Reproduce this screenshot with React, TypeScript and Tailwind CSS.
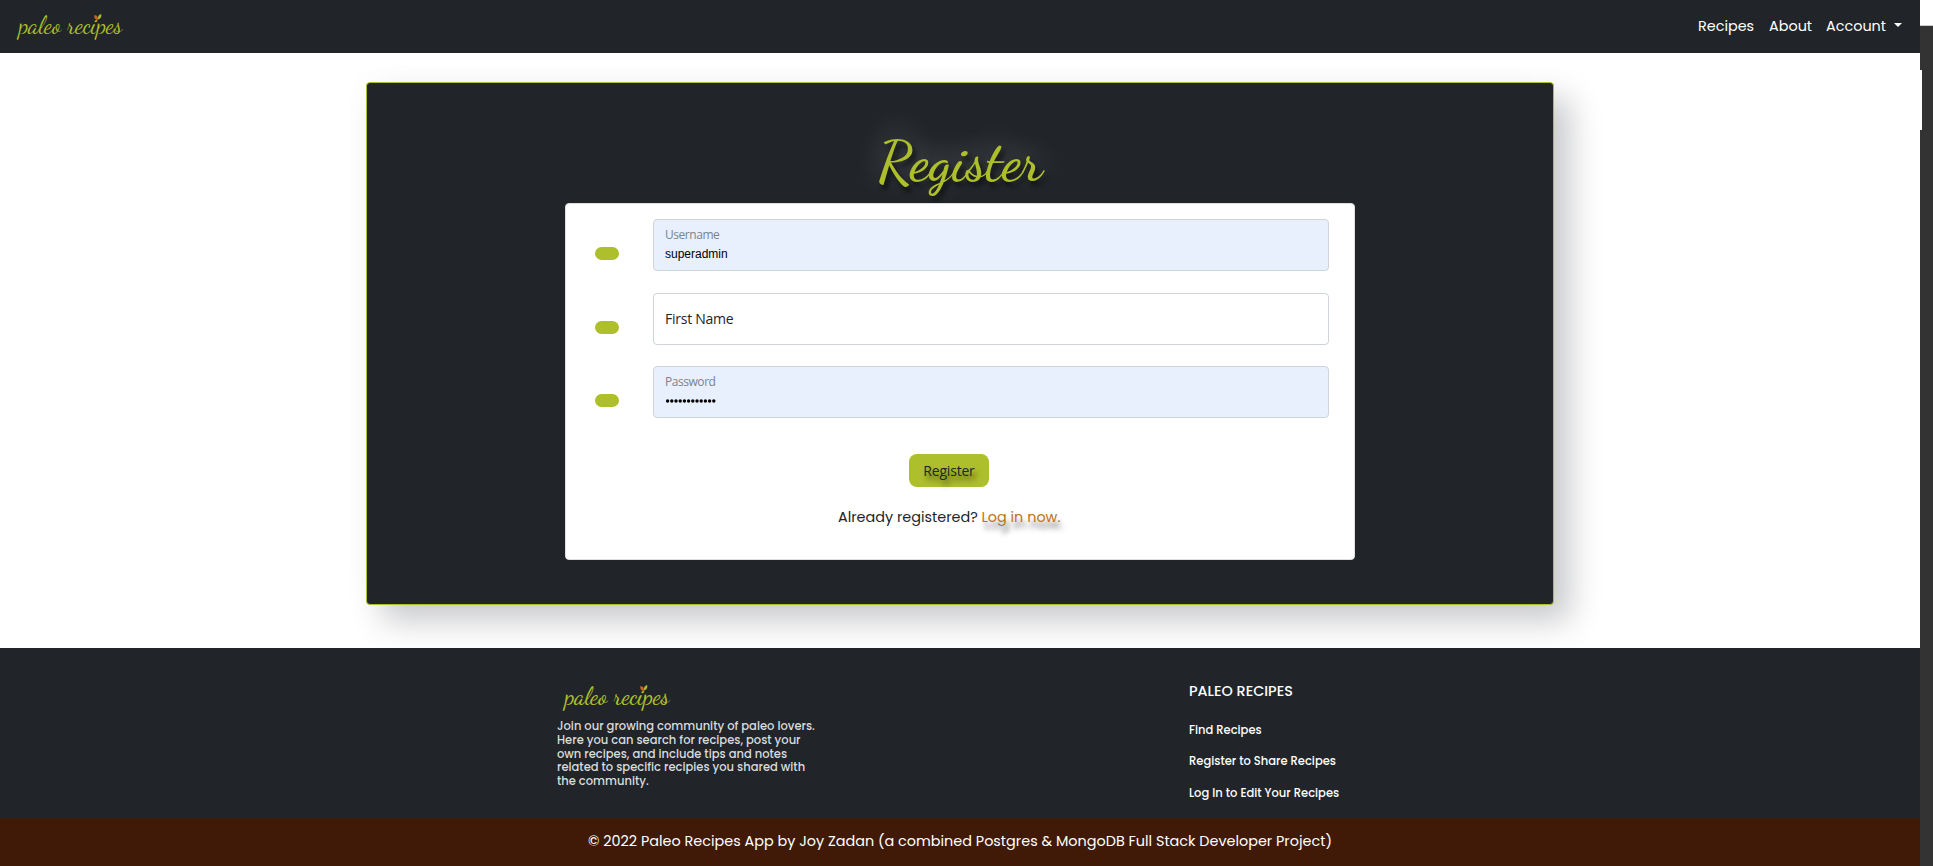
import type { ReactNode } from "react";

function Logo() {
  return (
    <span className="relative block h-[30px] w-[110px] whitespace-nowrap font-['Dancing_Script','Liberation_Serif',cursive] text-[23.8px] leading-[30px] text-[#adbf2a]">
      paleo recipes
      <svg className="absolute left-[75px] top-[3px]" width="8" height="7" viewBox="0 0 8 7">
        <path d="M0.2 1.2C2.8 0.9 4.2 2.6 4 6C1.4 6 0 4.2 0.2 1.2Z" fill="#c8641a" />
        <path d="M7.2 0C7.8 2.8 6.6 5 4 5.6C3.4 2.8 4.6 0.6 7.2 0Z" fill="#adbf2a" />
      </svg>
    </span>
  );
}

function Row({ className, children }: { className: string; children: ReactNode }) {
  return (
    <div className={`flex h-[52px] items-start ${className}`}>
      <span className="mt-[28px] h-[13px] w-6 rounded-full bg-[#adbf2a]" />
      {children}
    </div>
  );
}

function FilledField({ label, value }: { label: string; value: ReactNode }) {
  return (
    <div className="ml-[34px] h-[52px] w-[676px] rounded-[4px] border border-[#ced4da] bg-[#e8f0fe] px-[11px] pt-[7px]">
      <div className="h-4 font-['Open_Sans',sans-serif] text-[12px] leading-4 tracking-[-0.45px] text-[#7c838b]">{label}</div>
      {value}
    </div>
  );
}

export default function App() {
  return (
    <div className="flex h-[866px] w-[1933px] overflow-hidden bg-white font-['Poppins','Inter',sans-serif] text-[#212529]">
      <div className="flex w-[1920px] flex-col">
        <header className="relative z-10 flex h-[53px] items-center justify-between bg-[#212529] pb-px pl-[19px] pr-[18px]">
          <Logo />
          <nav className="flex items-center text-[14.4px] leading-6 text-white">
            <a className="w-[71px]">Recipes</a>
            <a className="w-[57px]">About</a>
            <a className="w-[68px]">Account</a>
            <svg className="-mt-0.5" width="8" height="4" viewBox="0 0 8 4">
              <path d="M0 0H8L4 4Z" fill="#fff" />
            </svg>
          </nav>
        </header>

        <main className="flex h-[595px] justify-center pt-[29px]">
          <section className="flex h-[523px] w-[1188px] flex-col items-center rounded-[4px] border border-[#adbf2a] bg-[#212529] shadow-[16px_16px_32px_#c8c9cc,-16px_-16px_32px_#fefefe]">
            <h1 className="mt-[39px] h-[81px] font-['Dancing_Script','Liberation_Serif',cursive] text-[57px] font-semibold leading-[80px] text-[#adbf2a] [text-shadow:3px_5px_5px_rgba(0,0,0,0.6),0_-8px_30px_rgba(255,255,255,0.3)]">
              Register
            </h1>
            <form className="h-[357px] w-[790px] rounded-[4px] border border-[#dfdfdf] bg-white pl-[29px]">
              <Row className="mt-[15px]">
                <FilledField
                  label="Username"
                  value={<div className="font-['Liberation_Sans',sans-serif] text-[12px] leading-[22px] text-black">superadmin</div>}
                />
              </Row>
              <Row className="mt-[22px]">
                <div className="ml-[34px] h-[52px] w-[676px] rounded-[4px] border border-[#ced4da] bg-white px-[11px] font-['Open_Sans',sans-serif] text-[14px] leading-[50px] tracking-[-0.25px]">
                  First Name
                </div>
              </Row>
              <Row className="mt-[21px]">
                <FilledField
                  label="Password"
                  value={
                    <svg className="mt-[9px]" width="52" height="4" viewBox="0 0 52 4">
                      {Array.from({ length: 12 }, (_, i) => (
                        <circle key={i} cx={2.6 + i * 4.2} cy="2" r="1.7" fill="#000" />
                      ))}
                    </svg>
                  }
                />
              </Row>
              <button
                type="button"
                className="ml-[314px] mt-[36px] block h-[33px] w-20 rounded-[8px] bg-[#adbf2a] font-['Open_Sans',sans-serif] text-[14px] leading-[33px] tracking-[-0.2px] [text-shadow:3px_5px_5px_rgba(0,0,0,0.5)]"
              >
                Register
              </button>
              <p className="ml-[243px] mt-[18px] whitespace-nowrap text-[14.4px] leading-6">
                Already registered?{" "}
                <a className="text-[#c17212] [text-shadow:3px_7px_5px_rgba(0,0,0,0.5)]">Log in now.</a>
              </p>
            </form>
          </section>
        </main>

        <footer className="flex h-[170px] bg-[#212529] pl-[557px] font-medium text-white">
          <div className="w-[632px] pt-[34px]">
            <div className="pl-[8px]">
              <Logo />
            </div>
            <p className="mt-[8px] whitespace-nowrap text-[11.52px] leading-[13.8px] text-[#d9dbdd]">
              Join our growing community of paleo lovers.
              <br />
              Here you can search for recipes, post your
              <br />
              own recipes, and include tips and notes
              <br />
              related to specific recipies you shared with
              <br />
              the community.
            </p>
          </div>
          <div className="pt-[31px] text-[11.52px]">
            <h2 className="text-[14.4px] leading-6">PALEO RECIPES</h2>
            <a className="mt-[19px] block leading-4">Find Recipes</a>
            <a className="mt-[15px] block leading-4">Register to Share Recipes</a>
            <a className="mt-[16px] block leading-4">Log In to Edit Your Recipes</a>
          </div>
        </footer>
        <div className="h-12 bg-[#401a07] text-center text-[14.4px] leading-[47px] text-white">
          © 2022 Paleo Recipes App by Joy Zadan (a combined Postgres &amp; MongoDB Full Stack Developer Project)
        </div>
      </div>

      <aside className="flex w-[13px] flex-col bg-[#333]">
        <div className="h-[26px] border-b border-[#ccc] bg-white" />
        <div className="mt-[44px] h-[60px] w-[2px] bg-white" />
      </aside>
    </div>
  );
}
